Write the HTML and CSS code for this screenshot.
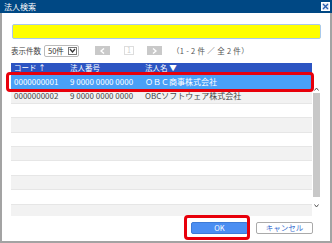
FILE: index.html
```html
<!DOCTYPE html>
<html lang="ja">
<head>
    <meta charset="UTF-8">
    <title>法人検索</title>
    <link rel="stylesheet" href="styles.css">
</head>
<body>

<div class="dialog">
    <div class="titlebar">
        <span class="title">法人検索</span>
        <span class="close">
            <svg width="7" height="7" viewBox="0 0 7 7"><path d="M1 1 L6 6 M6 1 L1 6" stroke="#2a5fb0" stroke-width="1.4"/></svg>
        </span>
    </div>

    <div class="search"></div>

    <div class="pager">
        <span class="label">表示件数</span>
        <span class="select">
            <span class="select-text">50件</span>
            <span class="select-arrow">
                <svg width="7" height="5" viewBox="0 0 7 5"><path d="M1 1 L3.5 4 L6 1" fill="none" stroke="#333" stroke-width="1.3"/></svg>
            </span>
        </span>
        <span class="pbtn prev">
            <svg width="5" height="6" viewBox="0 0 5 6"><path d="M4 0.5 L1 3 L4 5.5" fill="none" stroke="#fff" stroke-width="1.4"/></svg>
        </span>
        <span class="pnum">1</span>
        <span class="pbtn next">
            <svg width="5" height="6" viewBox="0 0 5 6"><path d="M1 0.5 L4 3 L1 5.5" fill="none" stroke="#fff" stroke-width="1.4"/></svg>
        </span>
        <span class="count">（1 - 2 件 ／ 全 2 件）</span>
    </div>

    <div class="grid">
        <div class="head">
            <span class="c1">コード ↑</span>
            <span class="c2">法人番号</span>
            <span class="c3">法人名 ▼</span>
        </div>
        <div class="body">
            <div class="rows">
                <div class="row selected"><span class="c1">0000000001</span><span class="c2">9 0000 0000 0000</span><span class="c3">ＯＢＣ商事株式会社</span></div>
                <div class="row alt"><span class="c1">0000000002</span><span class="c2">9 0000 0000 0000</span><span class="c3">OBCソフトウェア株式会社</span></div>
                <div class="row"></div>
                <div class="row alt"></div>
                <div class="row"></div>
                <div class="row alt"></div>
                <div class="row"></div>
                <div class="row alt"></div>
                <div class="row"></div>
                <div class="row alt"></div>
            </div>
            <div class="scrollbar">
                <span class="arrow up">
                    <svg width="5" height="4" viewBox="0 0 5 4"><path d="M0.5 3.5 L2.5 1 L4.5 3.5" fill="none" stroke="#555" stroke-width="1"/></svg>
                </span>
                <span class="thumb"></span>
                <span class="arrow down">
                    <svg width="5" height="4" viewBox="0 0 5 4"><path d="M0.5 0.5 L2.5 3 L4.5 0.5" fill="none" stroke="#555" stroke-width="1"/></svg>
                </span>
            </div>
        </div>
    </div>

    <div class="actions">
        <span class="btn ok">OK</span>
        <span class="btn cancel">キャンセル</span>
    </div>

    <!-- red highlight marks -->
    <div class="mark mark-row"></div>
    <div class="mark mark-ok"></div>
</div>

</body>
</html>
```

FILE: styles.css
```css
body {
    margin: 0;
    font-family: "Noto Sans CJK JP", "DejaVu Sans", sans-serif;
    font-size: 8px;
    color: #333;
    background: #fff;
}

.dialog {
    position: relative;
    width: 332px;
    height: 243px;
    box-sizing: border-box;
    border: 2px solid #a3a3a3;
    border-top: none;
    background: #fff;
}

.titlebar {
    height: 13px;
    margin: 0 -2px;
    background: #004884;
    color: #fff;
    display: flex;
    align-items: center;
    justify-content: space-between;
    padding-left: 4px;
    padding-right: 2px;
}

.title {
    font-size: 8px;
    line-height: 13px;
}

.close {
    width: 9px;
    height: 9px;
    box-sizing: border-box;
    background: #e9eef6;
    border: 1px solid #fff;
    display: flex;
    align-items: center;
    justify-content: center;
}

.search {
    margin: 11px 9px 0 10px;
    height: 15px;
    box-sizing: border-box;
    background: #ffff00;
    border: 1px solid #a9c9ec;
    border-radius: 2px;
}

.pager {
    margin: 5px 0 0 9px;
    height: 13px;
    display: flex;
    align-items: center;
    line-height: 1;
}

.label {
    font-size: 7.5px;
    color: #444;
}

.select {
    margin-left: 3px;
    width: 35px;
    height: 12px;
    box-sizing: border-box;
    border: 1px solid #bbb;
    border-radius: 2px;
    display: flex;
    align-items: center;
    justify-content: space-between;
    padding-left: 3px;
    padding-right: 1px;
}

.select-text {
    font-size: 7.5px;
}

.select-arrow {
    width: 9px;
    height: 8px;
    box-sizing: border-box;
    border: 1px solid #777;
    display: flex;
    align-items: center;
    justify-content: center;
}

.pbtn {
    width: 15px;
    height: 9px;
    background: #c9c9c9;
    display: flex;
    align-items: center;
    justify-content: center;
}

.prev {
    margin-left: 16px;
}

.pnum {
    margin-left: 14px;
    width: 10px;
    height: 9px;
    box-sizing: border-box;
    border: 1px solid #ddd;
    color: #ccc;
    font-size: 7px;
    line-height: 7px;
    text-align: center;
}

.next {
    margin-left: 13px;
}

.count {
    margin-left: 10px;
    font-size: 7.5px;
    letter-spacing: 0.3px;
    color: #555;
}

.grid {
    margin: 6px 9px 0 9px;
}

.head {
    width: 301px;
    height: 10px;
    background: #2c54c2;
    color: #fff;
    display: flex;
    align-items: center;
    font-size: 7.5px;
    line-height: 1;
}

.c1 {
    width: 59px;
    padding-left: 3px;
    box-sizing: border-box;
    flex-shrink: 0;
}

.c2 {
    width: 75px;
    flex-shrink: 0;
}

.c3 {
    flex: 1;
}

.body {
    display: flex;
    height: 141px;
    margin-top: 2px;
}

.rows {
    width: 301px;
    overflow: hidden;
}

.row {
    height: 14.4px;
    box-sizing: border-box;
    border-bottom: 1px solid #e6e6e6;
    display: flex;
    align-items: center;
    font-size: 8px;
    line-height: 1;
    color: #444;
}

.row.alt {
    background: #f2f2f2;
}

.row.selected {
    background: #4aa0f7;
    color: #fff;
    border-bottom: none;
}

.scrollbar {
    width: 9px;
    display: flex;
    flex-direction: column;
    align-items: center;
}

.arrow {
    display: flex;
    justify-content: center;
    width: 9px;
}

.arrow.up {
    height: 18px;
    align-items: flex-end;
    padding-bottom: 2px;
    box-sizing: border-box;
}

.arrow.down {
    flex: 1;
    align-items: flex-start;
    padding-top: 7px;
    box-sizing: border-box;
}

.thumb {
    width: 7px;
    height: 104px;
    background: #c8c8c8;
}

.actions {
    margin-top: 6px;
    padding-right: 17px;
    display: flex;
    justify-content: flex-end;
    gap: 8px;
}

.btn {
    width: 57px;
    height: 12px;
    box-sizing: border-box;
    border-radius: 2px;
    display: flex;
    align-items: center;
    justify-content: center;
    font-size: 7.5px;
    line-height: 1;
}

.ok {
    background: #4b8ef2;
    border: 1px solid #3d7ad6;
    color: #fff;
}

.cancel {
    background: #fff;
    border: 1px solid #aaa;
    color: #3a6fd0;
}

.mark {
    position: absolute;
    border: 3px solid #e8000b;
    border-radius: 4px;
    box-sizing: border-box;
}

.mark-row {
    left: 4px;
    top: 72px;
    width: 308px;
    height: 20px;
}

.mark-ok {
    left: 182px;
    top: 215px;
    width: 66px;
    height: 25px;
}
```
